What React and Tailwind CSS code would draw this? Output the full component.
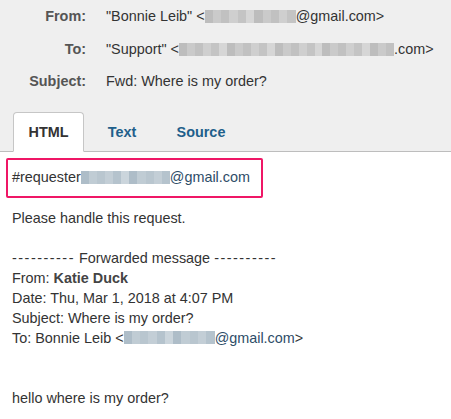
import React from 'react';

// pixelated redaction block, like the blurred addresses in the shot
const Redacted = ({ width, tone = 'gray' }) => {
  const shades =
    tone === 'blue'
      ? ['#c3ced6', '#b5c3cd', '#cbd5dc', '#aebdc8', '#c0ccd4', '#b9c6cf']
      : ['#cfcfcf', '#c4c4c4', '#d6d6d6', '#bdbdbd', '#cacaca', '#c1c1c1'];
  const cells = Math.max(1, Math.round(width / 8));
  return (
    <span
      className="inline-flex align-middle h-[13px] overflow-hidden -mt-[2px] blur-[0.4px]"
      style={{ width }}
    >
      {Array.from({ length: cells }).map((_, i) => (
        <span key={i} className="flex-1 h-full" style={{ background: shades[(i * 7 + 3) % shades.length] }} />
      ))}
    </span>
  );
};

const headerRows = [
  { label: 'From:', value: <>"Bonnie Leib" &lt;<Redacted width={91} />@gmail.com&gt;</> },
  { label: 'To:', value: <>"Support" &lt;<Redacted width={215} />.com&gt;</> },
  { label: 'Subject:', value: <>Fwd: Where is my order?</> },
];

export default function App() {
  return (
    <div className="w-[451px] h-[419px] overflow-hidden bg-white text-[14.4px] text-[#333] font-['Liberation_Sans',Arial,sans-serif]">
      {/* Header */}
      <div className="bg-[#efefef] border-b border-[#bdbdbd]">
        <div className="pt-px">
          {headerRows.map((row) => (
            <div key={row.label} className="flex items-center h-[32.5px] whitespace-nowrap">
              <div className="w-[86px] text-right font-bold text-[#555]">{row.label}</div>
              <div className="ml-[20px] text-[#333]">{row.value}</div>
            </div>
          ))}
        </div>

        {/* Tabs */}
        <div className="flex items-end mt-[13px] pl-[13px] -mb-px">
          <div className="w-[71px] h-[40px] pt-[3px] flex items-center justify-center bg-white border border-[#c6c6c6] border-b-white rounded-t-[4px] font-bold text-[#333]">
            HTML
          </div>
          <div className="w-[76px] h-[40px] pt-[3px] flex items-center justify-center font-bold text-[#1f5f8b]">
            Text
          </div>
          <div className="w-[82px] h-[40px] pt-[3px] flex items-center justify-center font-bold text-[#1f5f8b]">
            Source
          </div>
        </div>
      </div>

      {/* Body */}
      <div className="pt-[6px] pl-[6px]">
        <div className="w-[257px] h-[40px] pt-px border-2 border-[#ef1766] rounded-[2px] flex items-center pl-[4px] whitespace-nowrap">
          #requester<Redacted width={89} tone="blue" />
          <span className="text-[#2e4d68]">@gmail.com</span>
        </div>
      </div>

      <div className="pl-[12px] pt-[10px] leading-[20px] whitespace-nowrap">
        <div>Please handle this request.</div>
        <div className="h-[20px]" />
        <div>
          <span className="tracking-[1.5px]">----------</span> Forwarded message{' '}
          <span className="tracking-[1.5px]">----------</span>
        </div>
        <div>
          From: <span className="font-bold text-[#444]">Katie Duck</span>
        </div>
        <div>Date: Thu, Mar 1, 2018 at 4:07 PM</div>
        <div>Subject: Where is my order?</div>
        <div>
          To: Bonnie Leib &lt;<Redacted width={91} tone="blue" />
          <span className="text-[#2e4d68]">@gmail.com</span>&gt;
        </div>
        <div className="h-[40px]" />
        <div>hello where is my order?</div>
      </div>
    </div>
  );
}
